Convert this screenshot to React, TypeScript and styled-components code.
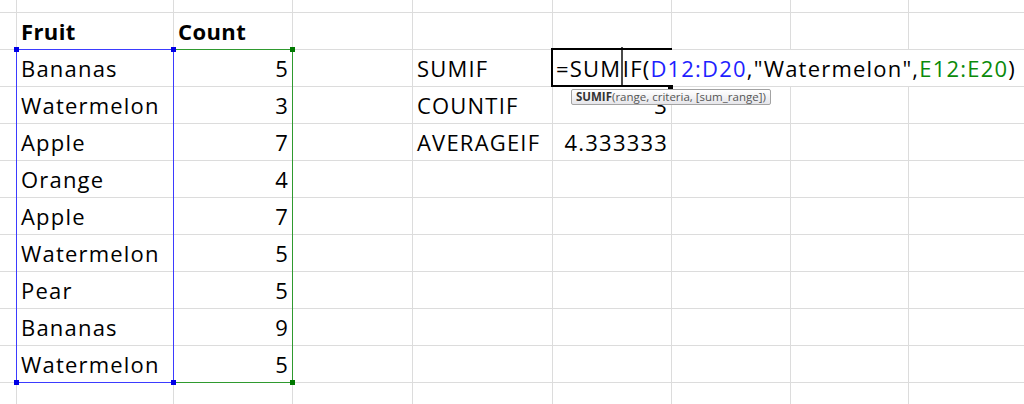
import React from 'react'
import styled, { createGlobalStyle } from 'styled-components'

const GlobalStyle = createGlobalStyle`
  html, body {
    margin: 0;
    padding: 0;
    background: #ffffff;
  }
`

// column widths / row heights in px, each includes its own right / bottom gridline
const COLS = [17, 157, 119, 120, 140, 119, 119, 118, 130]
const ROWS = [13, 37, 37, 37, 37, 37, 37, 37, 37, 37, 37, 37]

const colLine = (i: number) => COLS.slice(0, i + 1).reduce((a, b) => a + b, 0) - 1
const rowLine = (i: number) => ROWS.slice(0, i + 1).reduce((a, b) => a + b, 0) - 1

type CellValue = { text: string; bold?: boolean; right?: boolean }

const fruits: [string, number][] = [
  ['Bananas', 5],
  ['Watermelon', 3],
  ['Apple', 7],
  ['Orange', 4],
  ['Apple', 7],
  ['Watermelon', 5],
  ['Pear', 5],
  ['Bananas', 9],
  ['Watermelon', 5],
]

const buildCells = (): Record<string, CellValue> => {
  const cells: Record<string, CellValue> = {}
  cells['1-1'] = { text: 'Fruit', bold: true }
  cells['1-2'] = { text: 'Count', bold: true }
  fruits.forEach(([name, count], i) => {
    cells[`${i + 2}-1`] = { text: name }
    cells[`${i + 2}-2`] = { text: String(count), right: true }
  })
  cells['2-4'] = { text: 'SUMIF' }
  cells['3-4'] = { text: 'COUNTIF' }
  cells['3-5'] = { text: '3', right: true }
  cells['4-4'] = { text: 'AVERAGEIF' }
  cells['4-5'] = { text: '4.333333', right: true }
  return cells
}

const Sheet = styled.div`
  position: relative;
  width: 1024px;
  height: 404px;
  overflow: hidden;
  display: grid;
  grid-template-columns: ${COLS.map((c) => `${c}px`).join(' ')};
  grid-template-rows: ${ROWS.map((r) => `${r}px`).join(' ')};
  font-family: 'Open Sans', 'Noto Sans', sans-serif;
  font-size: 22px;
  letter-spacing: 1.2px;
  color: #000;
`

const Cell = styled.div<{ $bold?: boolean; $right?: boolean }>`
  box-sizing: border-box;
  border-right: 1px solid #dcdcdc;
  border-bottom: 1px solid #dcdcdc;
  display: flex;
  align-items: flex-end;
  justify-content: ${(p) => (p.$right ? 'flex-end' : 'flex-start')};
  padding: 0 3px 3px 4px;
  line-height: 30px;
  white-space: nowrap;
  font-weight: ${(p) => (p.$bold ? 700 : 400)};
  letter-spacing: ${(p) => (p.$bold ? '0.4px' : 'inherit')};
`

const RangeBox = styled.div<{ $color: string }>`
  position: absolute;
  box-sizing: border-box;
  border: 1px solid ${(p) => p.$color};
  pointer-events: none;
`

const Handle = styled.div<{ $color: string }>`
  position: absolute;
  width: 5px;
  height: 5px;
  background: ${(p) => p.$color};
`

const Editor = styled.div`
  position: absolute;
  left: 553px;
  top: 50px;
  right: 0;
  height: 36px;
  background: #fff;
  display: flex;
  align-items: flex-end;
  padding: 0 0 3px 3px;
  box-sizing: border-box;
  line-height: 30px;
  white-space: nowrap;
`

const Ref = styled.span<{ $color: string }>`
  color: ${(p) => p.$color};
`

const Caret = styled.span`
  align-self: stretch;
  width: 1.5px;
  margin: -3px 0 -3px 0;
  background: #4a4a4a;
`

const Selection = styled.div`
  position: absolute;
  left: 551px;
  top: 48px;
  width: 121px;
  height: 39px;
  box-sizing: border-box;
  border: 2px solid #000;
  border-right: none;
`

const FillHandle = styled.div`
  position: absolute;
  left: 668px;
  top: 85px;
  width: 5px;
  height: 5px;
  background: #000;
`

const Tooltip = styled.div`
  position: absolute;
  left: 571px;
  top: 89px;
  height: 16px;
  box-sizing: border-box;
  padding: 0 4px 0 4px;
  border: 1px solid #a3a3a3;
  border-radius: 2px;
  background: linear-gradient(#ffffff, #e6e6ea);
  font-size: 11.5px;
  letter-spacing: 0;
  line-height: 14px;
  color: #555;
  white-space: nowrap;
  b {
    color: #333;
    font-weight: 700;
  }
`

const BLUE = '#3b3bff'
const BLUE_DARK = '#0000e6'
const GREEN = '#2f9a2f'
const GREEN_DARK = '#007800'

const App: React.FC = () => {
  const cells = buildCells()

  const blue = { left: colLine(0), top: rowLine(1), right: colLine(1), bottom: rowLine(10) }
  const green = { left: colLine(1), top: rowLine(1), right: colLine(2), bottom: rowLine(10) }

  const boxStyle = (b: typeof blue) => ({
    left: b.left,
    top: b.top,
    width: b.right - b.left + 1,
    height: b.bottom - b.top + 1,
  })
  const at = (x: number, y: number) => ({ left: x - 2, top: y - 2 })

  return (
    <>
      <GlobalStyle />
      <Sheet>
        {ROWS.map((_, r) =>
          COLS.map((__, c) => {
            const v = cells[`${r}-${c}`]
            return (
              <Cell key={`${r}-${c}`} $bold={v?.bold} $right={v?.right}>
                {v?.text}
              </Cell>
            )
          })
        )}

        <RangeBox $color={GREEN} style={boxStyle(green)} />
        <Handle $color={GREEN_DARK} style={at(green.right, green.top)} />
        <Handle $color={GREEN_DARK} style={at(green.right, green.bottom)} />

        <RangeBox $color={BLUE} style={boxStyle(blue)} />
        <Handle $color={BLUE_DARK} style={at(blue.left, blue.top)} />
        <Handle $color={BLUE_DARK} style={at(blue.right, blue.top)} />
        <Handle $color={BLUE_DARK} style={at(blue.left, blue.bottom)} />
        <Handle $color={BLUE_DARK} style={at(blue.right, blue.bottom)} />

        <Editor>
          <span>=SUM</span>
          <Caret />
          <span>IF(</span>
          <Ref $color="#1f1fff">D12:D20</Ref>
          <span>,"Watermelon",</span>
          <Ref $color="#0a8a0a">E12:E20</Ref>
          <span>)</span>
        </Editor>
        <Selection />
        <FillHandle />

        <Tooltip>
          <b>SUMIF</b>(range, criteria, [sum_range])
        </Tooltip>
      </Sheet>
    </>
  )
}

export default App
